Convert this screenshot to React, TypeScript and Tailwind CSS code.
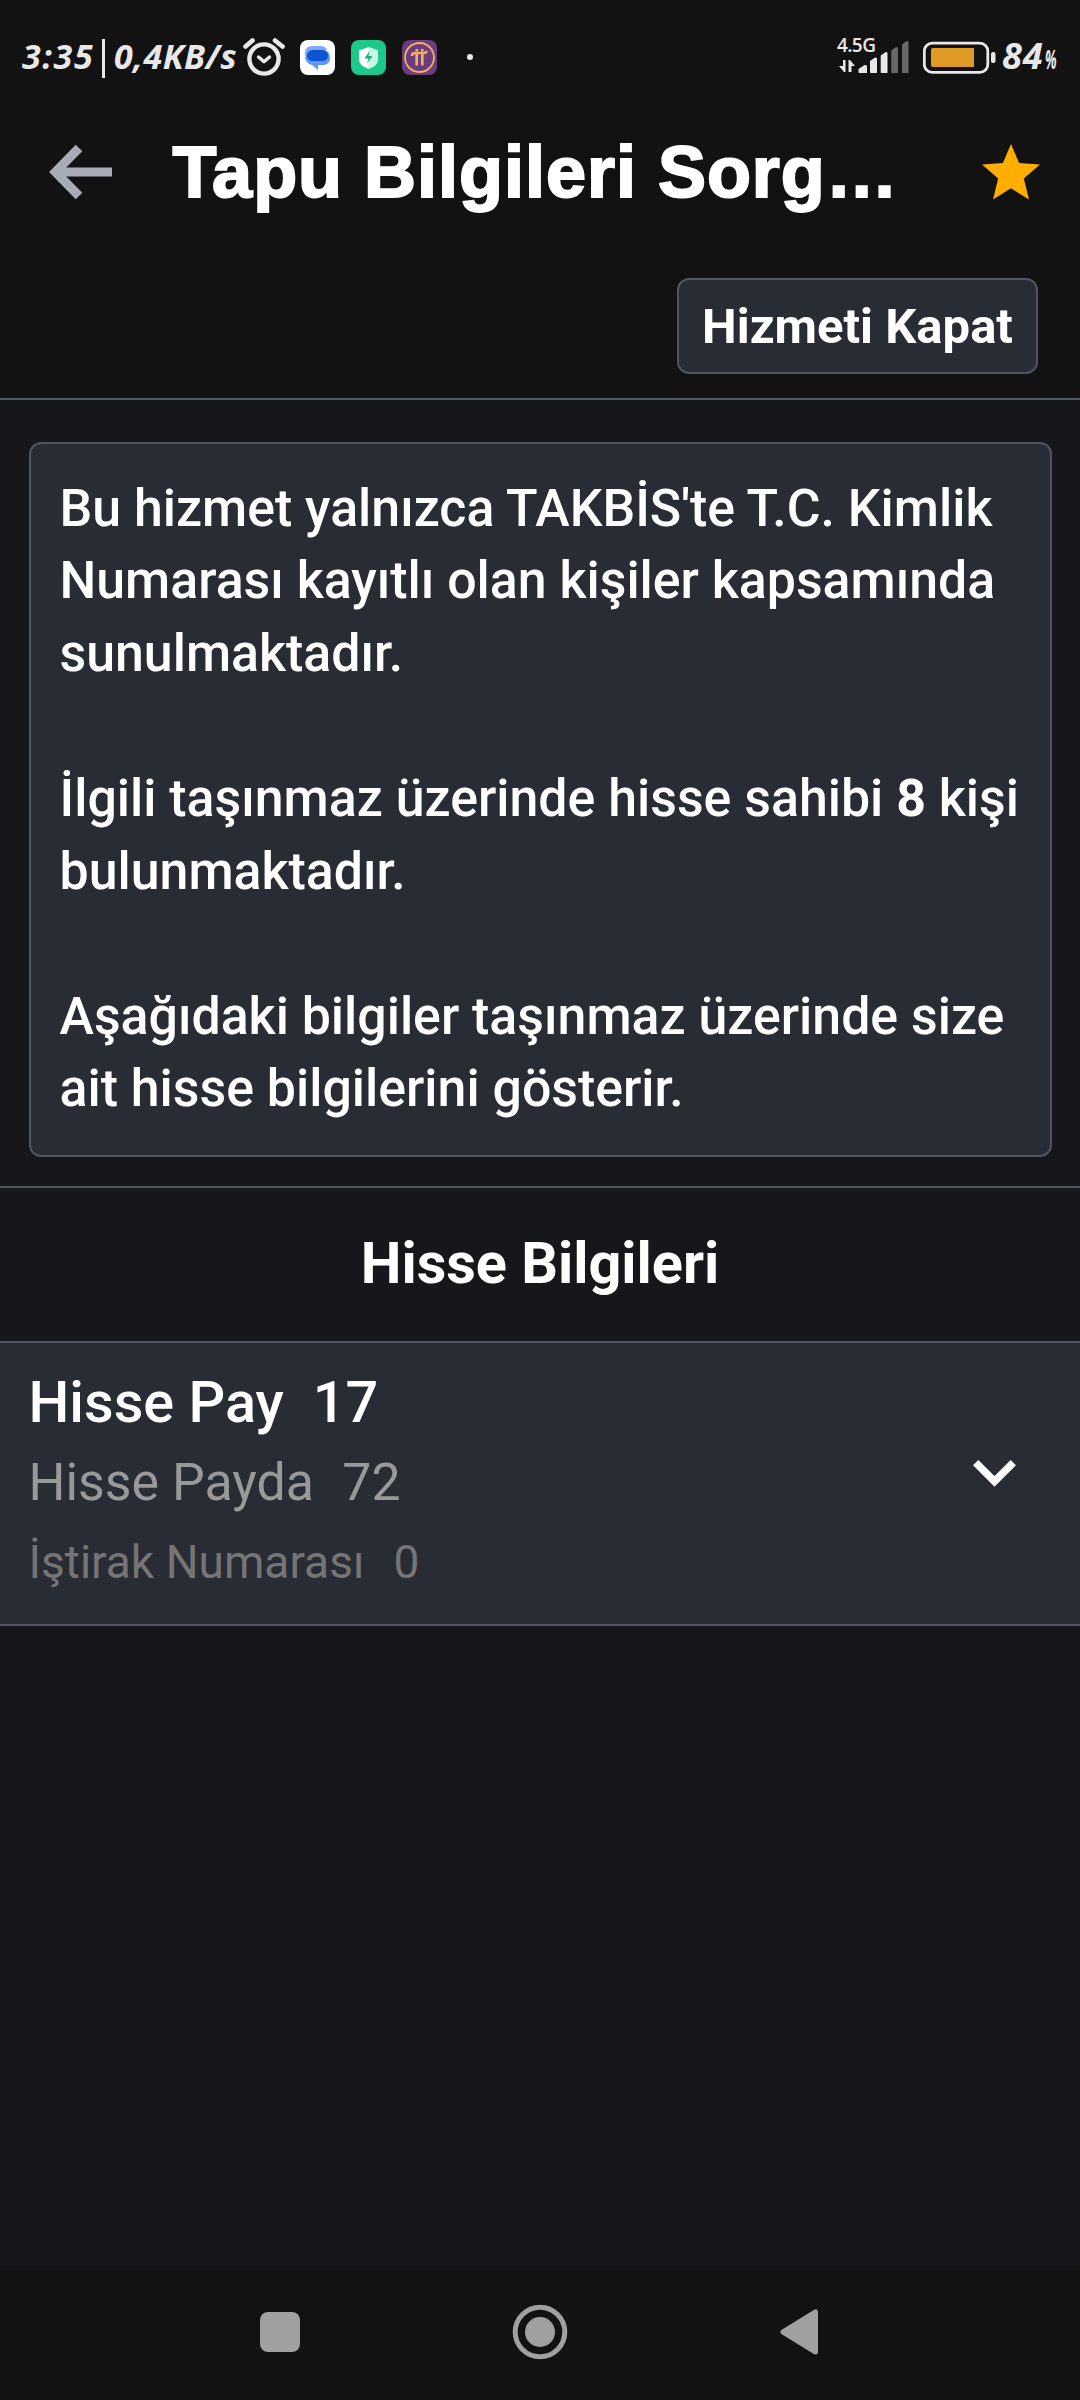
import type { ReactNode } from 'react';

function StatusBar() {
  return (
    <div className="flex h-[100px] items-start pt-[36px] text-[#e8e8e8] font-['Open_Sans',sans-serif] font-bold italic whitespace-nowrap">
      <div className="ml-[22px] w-[80px] text-[34px] leading-[40px] tracking-[1.600px]">3:35</div>
      <div className="mt-[3px] h-[39px] w-[3px] bg-[#e8e8e8]" />
      <div className="ml-[9px] w-[129px] text-[34px] leading-[40px] tracking-[0.500px]">0,4KB/s</div>
      <svg className="mt-px h-[41px] w-[42px]" viewBox="243 37 42 41" fill="none" stroke="#e8e8e8" strokeLinecap="round" strokeLinejoin="round">
        <circle cx="264" cy="59" r="14.6" strokeWidth="4.4" />
        <path d="M245.5 46.5l7-6M275 40.500l7.500 6" strokeWidth="4.600" />
        <path d="M258.500 57l5.500 4.800 5.500-4.800" strokeWidth="3.400" />
      </svg>
      <svg className="ml-[15px] mt-1 size-[35px]" viewBox="0 0 35 35">
        <rect width="35" height="35" rx="8" fill="#fff" />
        <path d="M12 6h8q6 0 7 4h-9l-11 9q-3-3-2-7 1-6 7-6z" fill="#7fa9f7" />
        <path d="M12 10h12q6 1 6 8 0 6-6 7h-6v5l-6-5q-5-1-7-7z" fill="#6096f8" />
        <rect x="7" y="10" width="21" height="11" rx="5.500" fill="#0b55cf" />
      </svg>
      <svg className="ml-4 mt-1 size-[35px]" viewBox="0 0 35 35">
        <rect width="35" height="35" rx="8" fill="#1dc88d" />
        <path d="M17.500 7l9.500 3.500v9q0 6-9.500 9.500Q8 25.500 8 19.500v-9z" fill="#fff" />
        <path d="M17.500 7l9.500 3.500v9q0 6-9.500 9.500z" fill="#c4f8e3" />
        <path d="M18.500 11l-5 7.500h4l-1.500 5 5.500-7.500h-4z" fill="#20ad7c" />
      </svg>
      <svg className="ml-4 mt-1 size-[35px]" viewBox="0 0 35 35" fill="none" stroke="#f4ad61">
        <rect width="35" height="35" rx="8" fill="#6b3d7c" stroke="none" />
        <circle cx="17.500" cy="17.500" r="14.500" strokeWidth="1.800" />
        <path d="M10 16q0-3 3-3h9q2 0 3-2M14.700 13v12.500M20.300 13v12.500" strokeWidth="2.700" />
        <path d="M13.500 10.200h2.600M19 10.200h2.600" strokeWidth="2.600" />
      </svg>
      <div className="ml-[30px] mt-[18px] size-[6px] rounded-full bg-[#e8e8e8]" />
      <div className="ml-[364px] w-[86px]">
        <div className="h-[18px] text-[19px] font-semibold not-italic leading-[18px] tracking-[-0.6px]">4.5G</div>
        <svg className="-mt-[13px] h-[33px] w-[74px]" viewBox="837 42 74 33" fill="#e8e8e8">
          <path d="M843 61h2.500v12h-1.500l-5-6h4zM848.500 61h1.500l5 6h-3.500v6h-3z" />
          <path d="M858.500 70l6-4q2.500 0 2.500 1v7h-7.500q-1 0-1-1zM870 62l5-3.500q2 0 2 1V74h-6q-1 0-1-1zM880.700 56.500l5-3.500q1.800 0 1.800 1V74h-5.800q-1 0-1-1z" />
          <path d="M891.300 51.500l4.700-3.500q2 0 2 1V74h-5.700q-1 0-1-1zM902 45.500l4.700-3.500q1.800 0 1.800 1V74H903q-1 0-1-1z" fill="#686868" />
        </svg>
      </div>
      <svg className="mt-[5px] h-[34px] w-[73px]" viewBox="923 41 73 34">
        <rect x="924.300" y="43.100" width="63.500" height="29.300" rx="8" fill="none" stroke="#e8e8e8" strokeWidth="2.800" />
        <rect x="931" y="48" width="43" height="19" rx="2" fill="#df9a26" />
        <path d="M974 48v19h-3V48z" fill="#df9a26" />
        <rect x="991" y="52" width="4.500" height="11" rx="2" fill="#e8e8e8" />
      </svg>
      <div className="ml-[6px] flex items-baseline text-[36px] leading-[40px]">
        <span className="w-[43px] tracking-[1px]">84</span>
        <span className="w-[12px] origin-left scale-x-[0.5] text-[27px]">%</span>
      </div>
    </div>
  );
}

function TitleBar() {
  return (
    <div className="flex h-[144px] items-center">
      <svg className="ml-[49px] h-[56px] w-[63px] shrink-0" viewBox="0 0 63 56" fill="none" stroke="#a9abb8">
        <path d="M30 4L6.500 28 30 52" strokeWidth="9.200" />
        <path d="M8 28h55" strokeWidth="9.200" />
      </svg>
      <h1 className="ml-[60.500px] w-[779.500px] whitespace-nowrap font-['Liberation_Sans',sans-serif] text-[72px] font-bold leading-[144px] tracking-[0.980px] text-white [-webkit-text-stroke:2px_white]">
        Tapu Bilgileri Sorg…
      </h1>
      <svg className="ml-[30px] h-[56px] w-[58px] shrink-0" viewBox="0 0 58 56" fill="#ffae00">
        <path d="M29 0l8.100 19L58 20.500 41.800 34.500 47 55.500 29 44.300 11 55.500l5.200-21L0 20.500 20.900 19z" />
      </svg>
    </div>
  );
}

function ShareLine({ label, value, className }: { label: string; value: ReactNode; className: string }) {
  return (
    <div className={`flex h-20 whitespace-nowrap ${className}`}>
      <span>{label}</span>
      <span>{value}</span>
    </div>
  );
}

function NavBar() {
  return (
    <nav className="flex h-[130px] items-center bg-[#121212] pb-[6px]">
      <div className="ml-[260px] size-[40px] rounded-[8px] bg-[#a0a0a0]" />
      <svg className="ml-[212px] size-[56px]" viewBox="0 0 56 56">
        <circle cx="28" cy="28" r="24.800" fill="none" stroke="#a0a0a0" strokeWidth="5" />
        <circle cx="28" cy="28" r="15" fill="#a0a0a0" />
      </svg>
      <svg className="ml-[212px] h-[46px] w-[38px]" viewBox="0 0 38 46">
        <path d="M3 23L35.500 3v40z" fill="#a0a0a0" stroke="#a0a0a0" strokeWidth="5" strokeLinejoin="round" />
      </svg>
    </nav>
  );
}

export default function App() {
  return (
    <div className="flex h-[2400px] w-[1080px] flex-col overflow-hidden bg-[#16171b] font-['Roboto',sans-serif] text-white">
      <header className="h-[400px] shrink-0 border-b-2 border-[#50565f] bg-[#121212]">
        <StatusBar />
        <TitleBar />
        <div className="flex justify-end pt-[34px] pr-[42px]">
          <button className="h-[96px] w-[361px] rounded-[12px] border-2 border-[#50565f] bg-[#282c34] text-[49px] font-bold leading-[93px] whitespace-nowrap">
            Hizmeti Kapat
          </button>
        </div>
      </header>

      <main className="flex-1 bg-linear-to-b from-[#131517] to-[#16171b] to-[24px]">
        <section className="mt-[42px] mr-[28px] ml-[29px] h-[715px] rounded-[12px] border-2 border-[#50565f] bg-[#282c34] pt-[28.600px] pl-[28.500px] text-[51.850px] font-medium leading-[72.600px] whitespace-nowrap">
          <p>
            Bu hizmet yalnızca TAKBİS'te T.C. Kimlik
            <br />
            Numarası kayıtlı olan kişiler kapsamında
            <br />
            sunulmaktadır.
          </p>
          <p className="mt-[72.600px]">
            İlgili taşınmaz üzerinde hisse sahibi <b className="font-bold">8</b> kişi
            <br />
            bulunmaktadır.
          </p>
          <p className="mt-[72.600px]">
            Aşağıdaki bilgiler taşınmaz üzerinde size
            <br />
            ait hisse bilgilerini gösterir.
          </p>
        </section>

        <h2 className="mt-[29px] h-[155px] border-t-2 border-[#50565f] text-center text-[57.600px] font-bold leading-[152px]">
          Hisse Bilgileri
        </h2>

        <section className="flex h-[285px] items-start justify-between border-y-2 border-[#50565f] bg-[#282c34] pt-[20px] pr-[64px] pl-[28.500px]">
          <div>
            <ShareLine label="Hisse Pay" value="17" className="gap-[29px] text-[57.600px] leading-[80px] font-medium" />
            <ShareLine label="Hisse Payda" value="72" className="gap-[28.500px] text-[51.850px] leading-[80px] text-[#999999]" />
            <ShareLine label="İştirak Numarası" value="0" className="gap-[29px] text-[46.080px] leading-[78px] text-[#757575]" />
          </div>
          <svg className="mt-[97px] h-[27px] w-[43px]" viewBox="0 0 43 27" fill="none" stroke="#fff" strokeWidth="7.500">
            <path d="M2.700 2.700L21.500 21.500 40.300 2.700" />
          </svg>
        </section>
      </main>

      <NavBar />
    </div>
  );
}
